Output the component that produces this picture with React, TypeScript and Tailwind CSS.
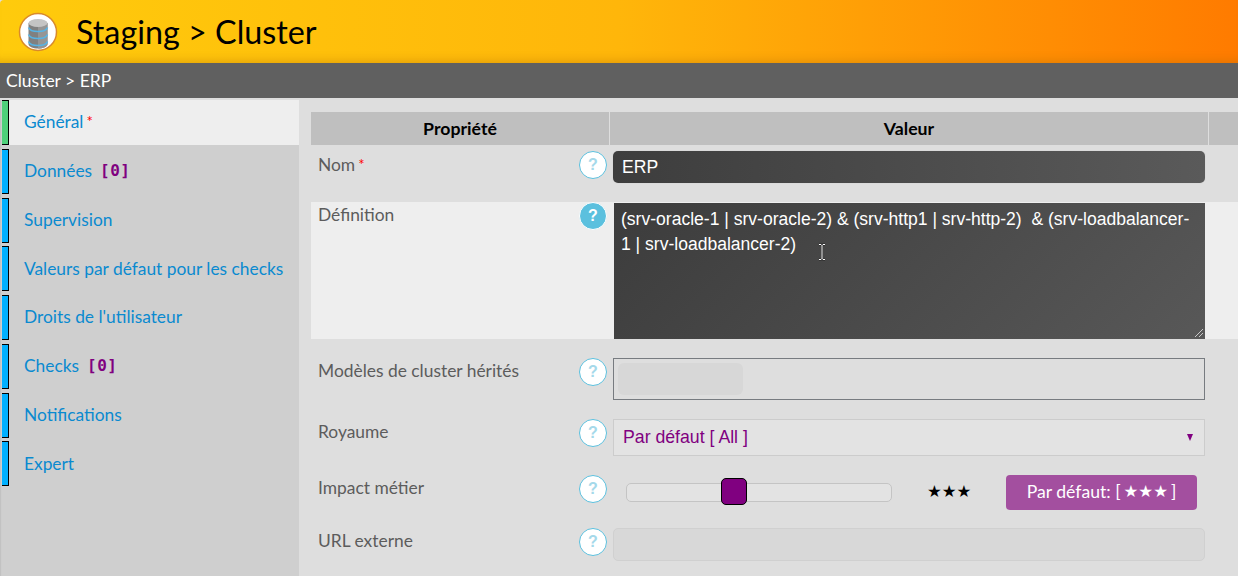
const tabs = [
  { label: 'Général', required: true, active: true },
  { label: 'Données', count: '[0]' },
  { label: 'Supervision' },
  { label: 'Valeurs par défaut pour les checks' },
  { label: "Droits de l'utilisateur" },
  { label: 'Checks', count: '[0]' },
  { label: 'Notifications' },
  { label: 'Expert' },
];

function Required() {
  return <span className="ml-[3px] align-[1px] text-[15px] text-[#f00]">*</span>;
}

function Help({ on }: { on?: boolean }) {
  return (
    <div
      className={
        on
          ? 'flex h-[28px] w-[28px] shrink-0 items-center justify-center rounded-full border border-white bg-[#5bc0de] font-["Liberation_Sans"] text-[16px] font-bold text-white'
          : 'flex h-[28px] w-[28px] shrink-0 items-center justify-center rounded-full border border-[#5bc0de] bg-white font-["Liberation_Sans"] text-[16px] font-bold text-[#a5d9ea]'
      }
    >
      ?
    </div>
  );
}

function DbIcon() {
  return (
    <svg width="40" height="40" viewBox="0 0 40 40" className="shrink-0">
      <circle cx="20" cy="20" r="18.5" fill="#fff" stroke="#d98a2b" strokeWidth="1.5" />
      <path d="M10.500 11v21c0 2.500 4.200 4.500 9.500 4.500s9.500-2 9.500-4.500V11z" fill="#808080" />
      <path d="M20 11h9.500v21c0 2.500-4.200 4.500-9.500 4.500z" fill="#959595" />
      <ellipse cx="20" cy="11" rx="9.500" ry="4" fill="#c4c4c4" />
      <path d="M10.500 15.500c1 2.500 4.500 4 9.500 4s8.500-1.500 9.500-4" fill="none" stroke="#56b4e6" strokeWidth="1.600" />
      <path d="M10.500 22.500c1 2.500 4.500 4 9.500 4s8.500-1.500 9.500-4" fill="none" stroke="#56b4e6" strokeWidth="1.600" />
      <path d="M10.500 29.500c1 2.500 4.500 4 9.500 4s8.500-1.500 9.500-4" fill="none" stroke="#56b4e6" strokeWidth="1.600" />
    </svg>
  );
}

function Row({
  label,
  required,
  highlight,
  height,
  helpOn,
  pt,
  children,
}: {
  label: string;
  required?: boolean;
  highlight?: boolean;
  height: string;
  helpOn?: boolean;
  pt: string;
  children: React.ReactNode;
}) {
  return (
    <div className={`flex ${height} ${highlight ? 'bg-[#eeeeee]' : ''}`}>
      <div className={`flex w-[299px] items-start justify-between pr-[3px] pl-[7px] ${pt}`}>
        <div className="pt-[1px] text-[17.4px] leading-[24px] text-[#5c5c5c]">
          {label}
          {required && <Required />}
        </div>
        <Help on={helpOn} />
      </div>
      <div className={`w-[598px] pl-[3px] ${pt}`}>{children}</div>
    </div>
  );
}

export default function App() {
  return (
    <div className="relative h-[576px] w-[1238px] overflow-hidden bg-[#dedede] font-['Lato',sans-serif]">
      <div className="flex h-[63px] items-center rounded-tl-[4px] bg-[linear-gradient(to_right,#ffcb0c,#ffb60a_50%,#ff7b00)] pl-[18px] shadow-[inset_0_-10px_10px_-8px_rgba(170,100,0,0.35)]">
        <DbIcon />
        <div className="ml-[18px] pt-[2px] text-[32.3px] leading-none text-black">Staging &gt; Cluster</div>
      </div>
      <div className="flex h-[35px] items-center bg-[#606060] pt-[2px] pl-[6px] text-[17.5px] text-white">Cluster &gt; ERP</div>

      <div className="flex pt-[2px]">
        <div className="flex h-[476px] w-[299px] shrink-0 flex-col gap-[3.75px] bg-[#cfcfcf] pl-[2px] shadow-[inset_2px_0_1px_-1px_#c0c0c0]">
          {tabs.map((tab) => (
            <div key={tab.label} className={`flex h-[45px] shrink-0 items-center text-[17.35px] text-[#0a8ad0] ${tab.active ? 'bg-[#eeeeee]' : ''}`}>
              <div className={`h-full w-[7px] shrink-0 border-y border-r border-black ${tab.active ? 'bg-[#4fd07a]' : 'bg-[#00b0ff]'}`} />
              <span className="ml-[15px]">
                {tab.label}
                {tab.required && <Required />}
              </span>
              {tab.count && (
                <span className="ml-[8px] font-['DejaVu_Sans_Mono',monospace] text-[16px] font-bold tracking-[0.5px] text-[#800080]">{tab.count}</span>
              )}
            </div>
          ))}
        </div>

        <div className="flex-1 pt-[12px] pl-[12px]">
          <div className="flex h-[33px] gap-[1px] text-[17.7px] font-bold text-black">
            <div className="flex w-[298px] items-center justify-center bg-[#bfbfbf] pt-[2px]">Propriété</div>
            <div className="flex w-[598px] items-center justify-center bg-[#bfbfbf] pt-[2px]">Valeur</div>
            <div className="flex-1 bg-[#bfbfbf]" />
          </div>

          <Row label="Nom" required height="h-[57px]" pt="pt-[6px]">
            <div className="flex h-[32px] w-[592px] items-center rounded-[5px] bg-[linear-gradient(to_right,#3d3d3d,#5a5a5a)] pl-[9px] font-['Liberation_Sans',sans-serif] text-[17.6px] text-white shadow-[0_0_1px_#bbb]">
              ERP
            </div>
          </Row>

          <Row label="Définition" highlight helpOn height="h-[137px]" pt="">
            <div className="relative mt-[1px] ml-[1px] h-[136px] w-[591px] bg-[linear-gradient(135deg,#3c3c3c,#585858)] px-[7px] pt-[4px] font-['Liberation_Sans',sans-serif] text-[17.55px] leading-[25px] whitespace-pre-wrap text-white">
              {'(srv-oracle-1 | srv-oracle-2) & (srv-http1 | srv-http-2)  & (srv-loadbalancer-\n1 | srv-loadbalancer-2)'}
              <svg width="10" height="10" viewBox="0 0 10 10" className="absolute right-[1px] bottom-[1px]">
                <path d="M1 9 9 1M5 9 9 5" stroke="#c8c8c8" strokeWidth="1" />
              </svg>
            </div>
          </Row>

          <Row label="Modèles de cluster hérités" height="h-[72px]" pt="pt-[19px]">
            <div className="h-[42px] w-[592px] border border-[#777b80] p-[4px]">
              <div className="h-[32px] w-[125px] rounded-[6px] bg-[#d7d7d7]" />
            </div>
          </Row>

          <Row label="Royaume" height="h-[56px]" pt="pt-[8px]">
            <div className="flex h-[37px] w-[592px] items-center justify-between border border-[#cccccc] bg-[#e3e3e3] pr-[11px] pl-[9px] font-['Liberation_Sans',sans-serif] text-[17.7px] text-[#800080]">
              <span>Par défaut [ All ]</span>
              <svg width="6" height="7" viewBox="0 0 6 7">
                <path d="M0 0h6L3 7z" fill="#800080" />
              </svg>
            </div>
          </Row>

          <Row label="Impact métier" height="h-[53px]" pt="pt-[8px]">
            <div className="flex h-[35px] w-[592px] items-center">
              <div className="relative ml-[13px] h-[19px] w-[266px] rounded-[5px] border border-[#c4c4c4] bg-[#e3e3e3]">
                <div className="absolute top-[-6px] left-[94px] h-[27px] w-[26px] rounded-[5px] border border-black bg-[#800080]" />
              </div>
              <div className="ml-[35px] w-[44px] font-['DejaVu_Sans',sans-serif] text-[16.5px] text-black">★★★</div>
              <div className="ml-[35px] flex h-[35px] w-[191px] items-center justify-center rounded-[4px] bg-[#a34f9f] text-[17.6px] text-white">
                Par défaut: [ <span className="mx-[3px] font-['DejaVu_Sans',sans-serif] text-[16.5px]">★★★</span> ]
              </div>
            </div>
          </Row>

          <Row label="URL externe" height="h-[56px]" pt="pt-[8px]">
            <div className="h-[33px] w-[592px] rounded-[5px] border border-[#d0d0d0] bg-[#d8d8d8]" />
          </Row>
        </div>
      </div>

      {/* souris au-dessus du textarea */}
      <svg width="10" height="18" viewBox="0 0 10 18" className="absolute top-[243px] left-[817px]">
        <path d="M2 1.500h2l1 1 1-1h2M5 2.500v13M2 16.500h2l1-1 1 1h2" fill="none" stroke="#222" strokeWidth="2" />
        <path d="M2 1.500h2l1 1 1-1h2M5 2.500v13M2 16.500h2l1-1 1 1h2" fill="none" stroke="#fff" strokeWidth="1" />
      </svg>
    </div>
  );
}
